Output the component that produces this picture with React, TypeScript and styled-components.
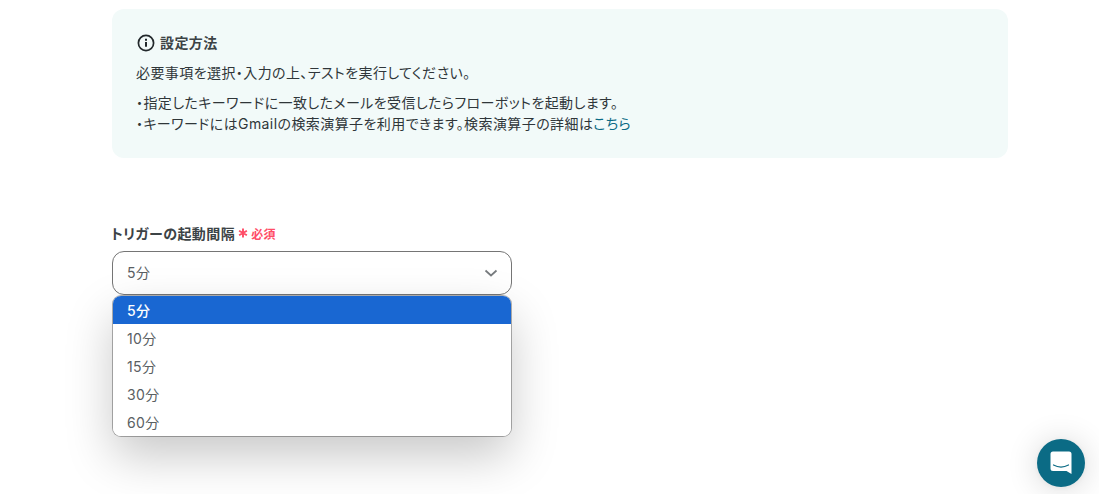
import React from "react";
import styled, { createGlobalStyle } from "styled-components";

const Global = createGlobalStyle`
  html, body { margin: 0; padding: 0; background: #fff; height: 100%; overflow: hidden; }
  body {
    font-family: Inter, "Noto Sans CJK JP", sans-serif;
    font-feature-settings: "palt";
    letter-spacing: 0.026em;
    color: #2f3639;
  }
`;

const Page = styled.main`
  box-sizing: border-box;
  width: 896px;
  margin-left: 112px;
  padding-top: 9px;
`;

const Banner = styled.section`
  box-sizing: border-box;
  height: 149px;
  padding: 24px 24px 0;
  background: #f2faf9;
  border-radius: 12px;
`;

const BannerTitle = styled.h3`
  display: flex;
  align-items: center;
  gap: 5px;
  height: 20px;
  margin: 0 0 9px 1px;
  font-size: 14px;
  line-height: 20px;
  font-weight: 700;
  color: #3c4346;
`;

const BannerText = styled.p`
  margin: 0 0 9px;
  font-size: 14px;
  line-height: 21px;
`;

const Link = styled.a`
  color: #0b6b85;
  text-decoration: none;
`;

const Field = styled.div`
  position: relative;
  width: 400px;
  margin-top: 65px;
`;

const Label = styled.div`
  display: flex;
  align-items: center;
  height: 20px;
  margin: 0 0 8px -1px;
  font-size: 14px;
  font-weight: 700;
  color: #3c4346;
`;

const Required = styled.span`
  display: inline-flex;
  align-items: center;
  gap: 3px;
  margin-left: 3px;
  color: #ff4d67;
  font-size: 12px;
  font-weight: 700;
`;

const Select = styled.div`
  box-sizing: border-box;
  display: flex;
  align-items: center;
  justify-content: space-between;
  height: 44px;
  padding: 0 13px 3px 14px;
  border: 1px solid #757575;
  border-radius: 12px;
  background: #fff;
  color: #5a6063;
  font-size: 14px;
`;

const Chevron = styled.svg`
  margin-top: 3px;
`;

const Menu = styled.ul`
  position: absolute;
  top: 73px;
  left: 1px;
  width: 398px;
  height: 140px;
  box-sizing: border-box;
  margin: 0;
  padding: 0;
  list-style: none;
  overflow: hidden;
  background: #fff;
  border-radius: 8px;
  box-shadow: 0 0 0 1px rgba(0,0,0,0.3), 0 20px 48px rgba(0,0,0,0.22);
`;

const Option = styled.li<{ $active?: boolean }>`
  box-sizing: border-box;
  height: 28px;
  padding: 0 14px;
  line-height: 30px;
  font-size: 14px;
  font-weight: ${p => (p.$active ? 500 : 400)};
  color: ${p => (p.$active ? "#fff" : "#5a6063")};
  background: ${p => (p.$active ? "#1967d2" : "#fff")};
`;

const Launcher = styled.button`
  position: fixed;
  right: 14px;
  bottom: 7px;
  display: flex;
  align-items: center;
  justify-content: center;
  width: 48px;
  height: 48px;
  padding: 0;
  border: 0;
  border-radius: 50%;
  background: #0b6b85;
  box-shadow: 0 1px 6px rgba(0,0,0,0.06), 0 2px 32px rgba(0,0,0,0.16);
`;

const options = ["5分", "10分", "15分", "30分", "60分"];

export default function App() {
  return (
    <Page>
      <Global />
      <Banner>
        <BannerTitle>
          <svg width="18" height="18" viewBox="0 0 18 18" fill="none" stroke="#22282b" strokeWidth="1.7">
            <circle cx="9" cy="9" r="7.6" />
            <path d="M9 8v4.8" strokeWidth="2" />
            <path d="M9 4.700v2" strokeWidth="2" />
          </svg>
          設定方法
        </BannerTitle>
        <BannerText>必要事項を選択・入力の上、テストを実行してください。</BannerText>
        <BannerText>
          ・指定したキーワードに一致したメールを受信したらフローボットを起動します。
          <br />
          ・キーワードにはGmailの検索演算子を利用できます。検索演算子の詳細は<Link href="#">こちら</Link>
        </BannerText>
      </Banner>
      <Field>
        <Label>
          トリガーの起動間隔
          <Required>
            <svg width="10" height="10" viewBox="0 0 10 10" stroke="#ff4d67" strokeWidth="1.9">
              <path d="M5 .5v9M1.100 2.750l7.800 4.500M8.900 2.750L1.100 7.250" />
            </svg>
            必須
          </Required>
        </Label>
        <Select>
          5分
          <Chevron width="14" height="14" viewBox="0 0 14 14" fill="none" stroke="#777b7e" strokeWidth="1.7">
            <path d="M1.500 4.500l5.500 5 5.500-5" />
          </Chevron>
        </Select>
        <Menu>
          {options.map((o, i) => (
            <Option key={o} $active={i === 0}>{o}</Option>
          ))}
        </Menu>
      </Field>
      <Launcher aria-label="chat">
        <svg width="22" height="24" viewBox="0 0 22 24">
          <path fill="#fff" d="M3 0.5h16a2.5 2.5 0 0 1 2.5 2.5v20l-5-3H3A2.5 2.5 0 0 1 .5 17.500V3A2.5 2.500 0 0 1 3 .5z" />
          <path fill="none" stroke="#0b6b85" strokeWidth="1.2" strokeLinecap="round" d="M3.500 14c4.500 2.500 10.500 2.500 15 0" />
        </svg>
      </Launcher>
    </Page>
  );
}
